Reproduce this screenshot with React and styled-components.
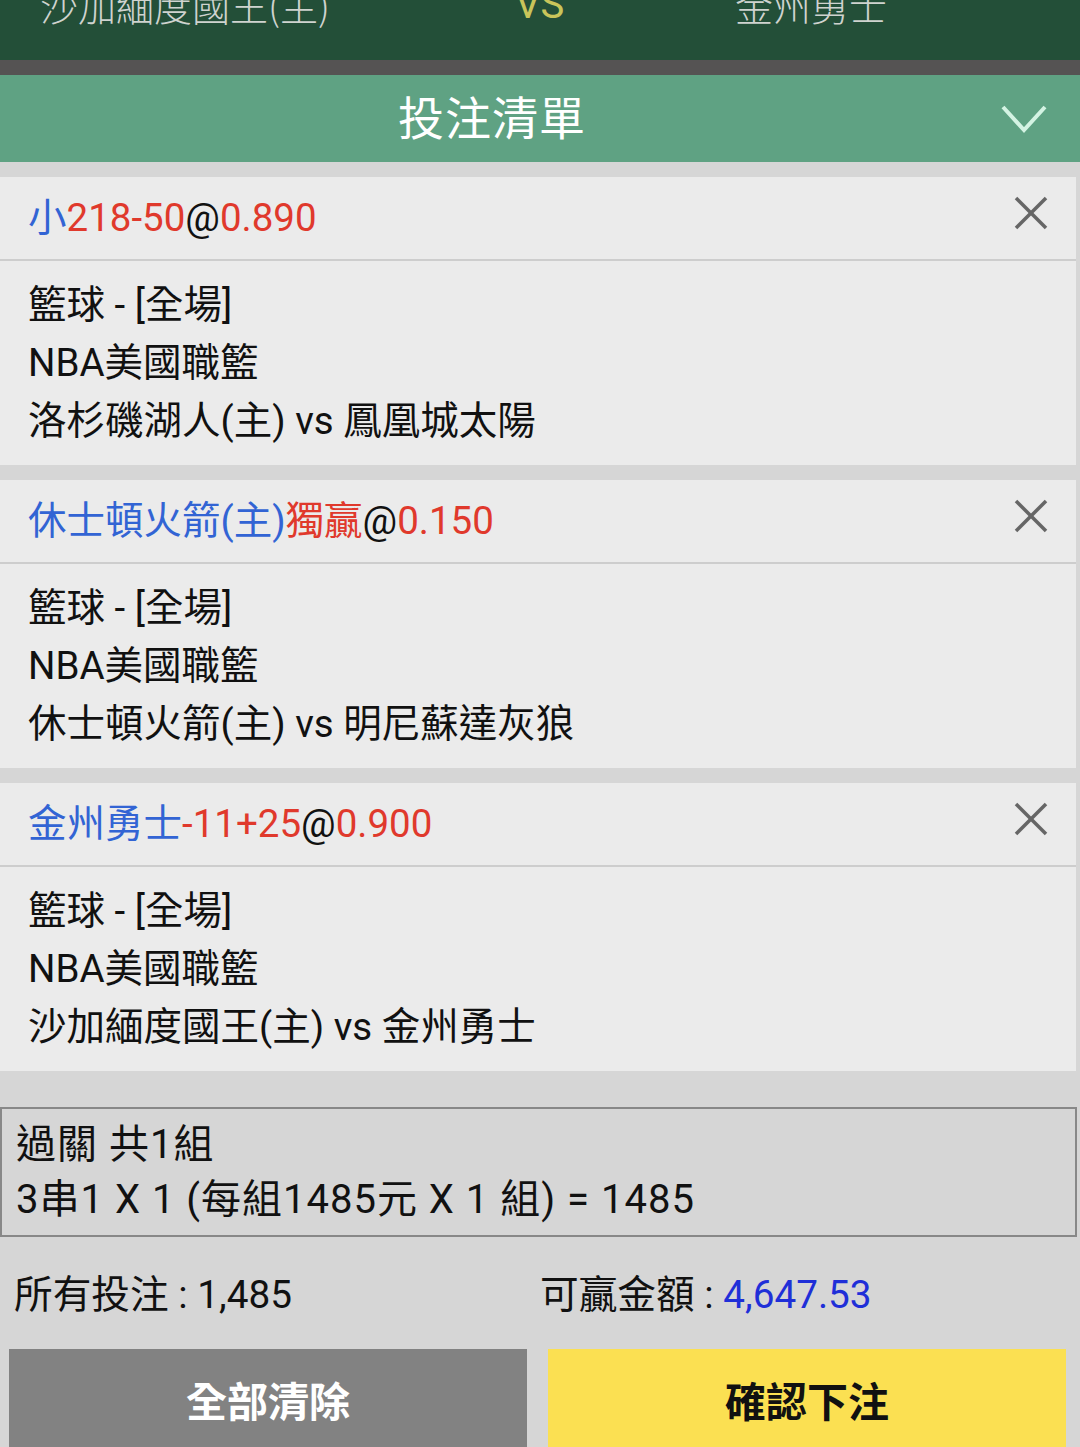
import React from "react";
import styled, { createGlobalStyle } from "styled-components";

const GlobalStyle = createGlobalStyle`
  html, body {
    margin: 0;
    padding: 0;
    background: #d6d6d6;
    font-family: Roboto, "Noto Sans CJK TC", sans-serif;
  }
  * { box-sizing: border-box; }
`;

const bets = [
  {
    title: [
      { text: "小", color: "blue" },
      { text: "218-50", color: "red" },
      { text: "@", color: "black" },
      { text: "0.890", color: "red" },
    ],
    lines: ["籃球 - [全場]", "NBA美國職籃", "洛杉磯湖人(主) vs 鳳凰城太陽"],
  },
  {
    title: [
      { text: "休士頓火箭(主)", color: "blue" },
      { text: "獨贏", color: "red" },
      { text: "@", color: "black" },
      { text: "0.150", color: "red" },
    ],
    lines: ["籃球 - [全場]", "NBA美國職籃", "休士頓火箭(主) vs 明尼蘇達灰狼"],
  },
  {
    title: [
      { text: "金州勇士", color: "blue" },
      { text: "-11+25", color: "red" },
      { text: "@", color: "black" },
      { text: "0.900", color: "red" },
    ],
    lines: ["籃球 - [全場]", "NBA美國職籃", "沙加緬度國王(主) vs 金州勇士"],
  },
];

const colors = { blue: "#3264d4", red: "#e0392c", black: "#111" };

export default function App() {
  return (
    <Page>
      <GlobalStyle />
      <MatchBar>
        <MatchRow>
          <Team>沙加緬度國王(主)</Team>
          <Versus>VS</Versus>
          <Team>金州勇士</Team>
        </MatchRow>
      </MatchBar>
      <DarkBand />
      <SlipHeader>
        <SlipTitle>投注清單</SlipTitle>
        <Chevron viewBox="0 0 46 28">
          <polyline points="2,2 23,25 44,2" />
        </Chevron>
      </SlipHeader>
      <BetList>
        {bets.map((bet, index) => (
          <BetCard key={index}>
            <BetHeader>
              <BetTitle>
                {bet.title.map((part, i) => (
                  <Part key={i} $color={colors[part.color]}>
                    {part.text}
                  </Part>
                ))}
              </BetTitle>
              <CloseIcon viewBox="0 0 34 34">
                <line x1="2" y1="2" x2="32" y2="32" />
                <line x1="32" y1="2" x2="2" y2="32" />
              </CloseIcon>
            </BetHeader>
            <BetBody>
              {bet.lines.map((line, i) => (
                <BodyLine key={i}>{line}</BodyLine>
              ))}
            </BetBody>
          </BetCard>
        ))}
      </BetList>
      <ParlayBox>
        <ParlayLine>過關 共1組</ParlayLine>
        <ParlayLine>3串1 X 1 (每組1485元 X 1 組) = 1485</ParlayLine>
      </ParlayBox>
      <Summary>
        <SummaryItem>所有投注 : 1,485</SummaryItem>
        <SummaryItem>
          可贏金額 : <Win>4,647.53</Win>
        </SummaryItem>
      </Summary>
      <Buttons>
        <ActionButton $variant="clear">全部清除</ActionButton>
        <ActionButton $variant="confirm">確認下注</ActionButton>
      </Buttons>
    </Page>
  );
}

const Page = styled.div`
  width: 1080px;
  height: 1447px;
  overflow: hidden;
  background: #d6d6d6;
`;

const MatchBar = styled.div`
  height: 60px;
  background: #234f38;
  overflow: hidden;
`;

const MatchRow = styled.div`
  display: grid;
  grid-template-columns: 475px 220px 1fr;
  padding-left: 40px;
  margin-top: -17px;
  font-size: 38px;
  line-height: 44px;
`;

const Team = styled.div`
  color: #cfd3cf;
  font-family: "Noto Sans CJK TC", sans-serif;
  font-weight: 300;
  white-space: nowrap;
`;

const Versus = styled.div`
  color: #c9c55a;
  font-family: Roboto, sans-serif;
  font-size: 40px;
`;

const DarkBand = styled.div`
  height: 15px;
  background: #555353;
`;

const SlipHeader = styled.div`
  height: 87px;
  background: #5fa283;
  display: flex;
  align-items: center;
  justify-content: center;
  position: relative;
  padding-bottom: 8px;
`;

const SlipTitle = styled.div`
  color: #ffffff;
  font-family: "Noto Sans CJK TC", sans-serif;
  font-size: 46px;
  letter-spacing: 1px;
  margin-left: -96px;
`;

const Chevron = styled.svg`
  position: absolute;
  right: 33px;
  top: 30px;
  width: 46px;
  height: 28px;
  fill: none;
  stroke: #d4f3e3;
  stroke-width: 4;
`;

const BetList = styled.div`
  padding-top: 15px;
  padding-right: 4px;
  display: flex;
  flex-direction: column;
  gap: 15px;
  margin-bottom: 36px;
`;

const BetCard = styled.div`
  background: #ebebeb;
`;

const BetHeader = styled.div`
  height: 84px;
  border-bottom: 2px solid #cdcdcd;
  display: flex;
  align-items: center;
  justify-content: space-between;
  padding: 0 28px 8px 28px;
`;

const BetTitle = styled.div`
  font-size: 38.5px;
  font-family: Roboto, "Noto Sans CJK TC", sans-serif;
`;

const Part = styled.span`
  color: ${(p) => p.$color};
`;

const CloseIcon = styled.svg`
  width: 34px;
  height: 34px;
  margin-top: -2px;
  fill: none;
  stroke: #666666;
  stroke-width: 3.5;
`;

const BetBody = styled.div`
  padding: 15px 28px 15px 28px;
`;

const BodyLine = styled.div`
  font-size: 38.5px;
  line-height: 58px;
  color: #111;
  white-space: nowrap;
`;

const ParlayBox = styled.div`
  width: 1077px;
  height: 130px;
  border: 2px solid #888888;
  padding: 8px 14px 0 14px;
`;

const ParlayLine = styled.div`
  font-size: 40px;
  line-height: 55px;
  letter-spacing: 1px;
  color: #111;
  white-space: nowrap;
`;

const Summary = styled.div`
  height: 112px;
  display: grid;
  grid-template-columns: 526px 1fr;
  align-items: center;
  padding: 0 14px 4px 14px;
`;

const SummaryItem = styled.div`
  font-size: 38.7px;
  color: #111;
  white-space: nowrap;
`;

const Win = styled.span`
  color: #1f2fd8;
`;

const Buttons = styled.div`
  display: grid;
  grid-template-columns: 518px 518px;
  column-gap: 21px;
  padding-left: 9px;
`;

const ActionButton = styled.div`
  height: 104px;
  display: flex;
  align-items: center;
  justify-content: center;
  padding-bottom: 4px;
  font-size: 41px;
  font-weight: 700;
  font-family: "Noto Sans CJK TC", sans-serif;
  background: ${(p) => (p.$variant === "confirm" ? "#fbe052" : "#828282")};
  color: ${(p) => (p.$variant === "confirm" ? "#111" : "#ffffff")};
`;
